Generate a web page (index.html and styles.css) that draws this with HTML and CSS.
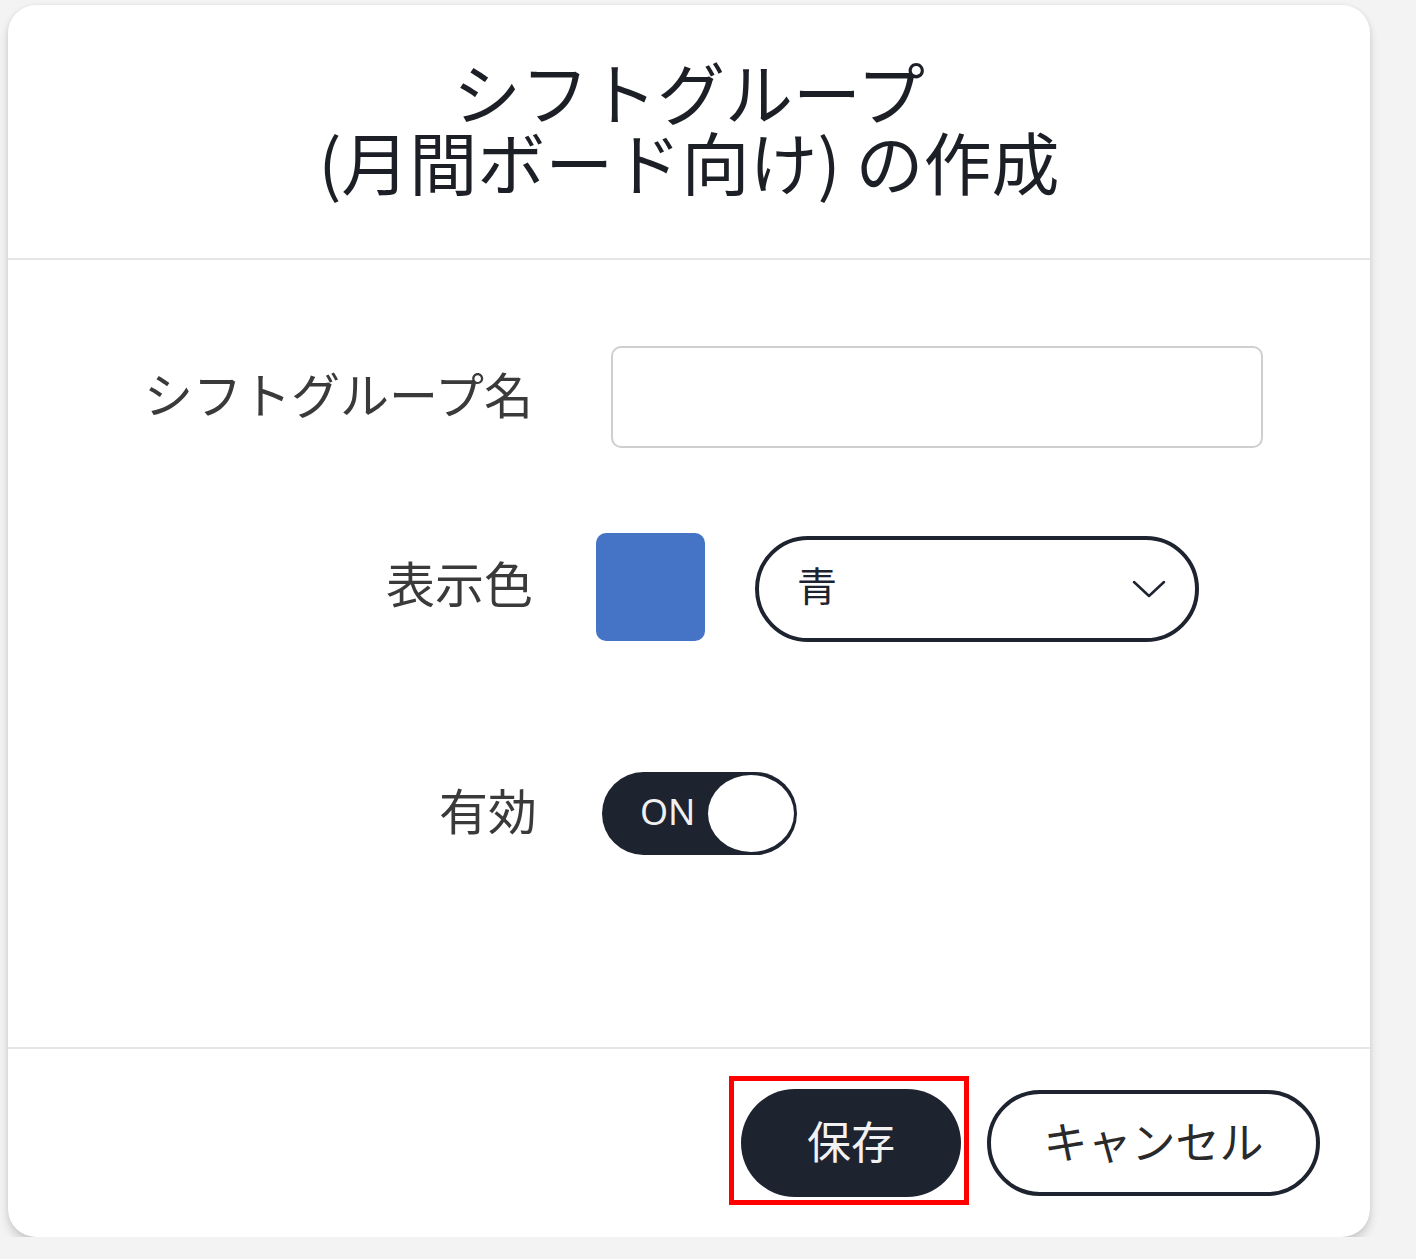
FILE: index.html
```html
<!doctype html>
<html lang="ja">

<head>
    <meta charset="UTF-8">
    <meta name="viewport" content="width=device-width, initial-scale=1.0">
    <title>シフトグループの作成</title>
    <link rel="stylesheet" href="styles.css">
</head>

<body>
    <div class="dialog">
        <div class="dialog-header">
            <h1>シフトグループ<br>(月間ボード向け) の作成</h1>
        </div>

        <div class="dialog-body">
            <div class="form-row row-name">
                <label for="groupName">シフトグループ名</label>
                <input type="text" id="groupName" class="text-input">
            </div>

            <div class="form-row row-color">
                <span class="label">表示色</span>
                <div class="color-field">
                    <span class="swatch"></span>
                    <div class="select-box">
                        <span class="select-value">青</span>
                        <svg width="34" height="18" viewBox="0 0 34 18">
                            <polyline points="2,2 17,16 32,2" fill="none" stroke="#1e2330" stroke-width="2.5" stroke-linecap="round" stroke-linejoin="round" />
                        </svg>
                    </div>
                </div>
            </div>

            <div class="form-row row-active">
                <span class="label label-active">有効</span>
                <div class="toggle">
                    <span class="toggle-text">ON</span>
                    <span class="knob"></span>
                </div>
            </div>
        </div>

        <div class="dialog-footer">
            <div class="highlight-wrap">
                <button class="btn btn-primary">保存</button>
                <span class="highlight"></span>
            </div>
            <button class="btn btn-outline">キャンセル</button>
        </div>
    </div>
</body>

</html>
```

FILE: styles.css
```css
body {
    background-color: #f3f3f3;
    font-family: 'Noto Sans CJK JP', 'Noto Sans', sans-serif;
    color: #1e2330;
    margin: 0;
    padding: 5px 0 0 8px;
}

.dialog {
    width: 1362px;
    height: 1232px;
    background-color: #fff;
    border-radius: 28px;
    box-shadow: 0 6px 10px rgba(0, 0, 0, 0.16), 0 0 4px rgba(0, 0, 0, 0.06);
    display: flex;
    flex-direction: column;
}

.dialog-header {
    height: 253px;
    border-bottom: 2px solid #e5e5e5;
    display: flex;
    align-items: center;
    justify-content: center;
}

.dialog-header h1 {
    margin: 0;
    font-size: 68px;
    line-height: 70px;
    font-weight: 400;
    text-align: center;
    color: #1c1f26;
    padding-bottom: 12px;
}

.dialog-body {
    flex: 1;
    padding-top: 86px;
}

.form-row {
    display: flex;
    align-items: center;
}

.form-row label,
.form-row .label {
    width: 525px;
    text-align: right;
    font-size: 49px;
    color: #3a3a3a;
    flex-shrink: 0;
    padding-bottom: 10px;
}

.form-row .label-active {
    width: 529px;
}

.row-color {
    margin-top: 83px;
}

.row-active {
    margin-top: 130px;
}

.text-input {
    margin-left: 78px;
    width: 652px;
    height: 102px;
    box-sizing: border-box;
    border: 2px solid #cfcfcf;
    border-radius: 10px;
    background-color: #fff;
    font-size: 40px;
    padding: 0 20px;
}

.color-field {
    margin-left: 63px;
    display: flex;
    align-items: center;
    gap: 50px;
}

.swatch {
    width: 109px;
    height: 108px;
    border-radius: 10px;
    background-color: #4574c6;
}

.select-box {
    width: 444px;
    height: 106px;
    box-sizing: border-box;
    border: 4px solid #1e2330;
    border-radius: 53px;
    display: flex;
    align-items: center;
    justify-content: space-between;
    padding: 0 29px 0 38px;
    font-size: 40px;
    margin-top: 5px;
}

.select-value {
    padding-bottom: 10px;
}

.toggle {
    margin-left: 65px;
    width: 195px;
    height: 83px;
    box-sizing: border-box;
    background-color: #1e2330;
    border-radius: 42px;
    display: flex;
    align-items: center;
    justify-content: space-between;
    padding: 0 3px 0 38px;
}

.toggle-text {
    color: #f0f0f0;
    font-size: 36px;
    font-family: 'Noto Sans', sans-serif;
    padding-bottom: 4px;
}

.knob {
    width: 86px;
    height: 77px;
    border-radius: 50%;
    background-color: #fff;
}

.dialog-footer {
    height: 188px;
    border-top: 2px solid #e5e5e5;
    display: flex;
    align-items: center;
    justify-content: flex-end;
    gap: 26px;
    padding-right: 50px;
}

.btn {
    height: 108px;
    border-radius: 54px;
    font-family: inherit;
    font-size: 44px;
    cursor: pointer;
    padding-bottom: 8px;
}

.btn-primary {
    width: 220px;
    background-color: #1e2330;
    color: #f2f2f2;
    border: none;
    display: block;
}

.btn-outline {
    width: 333px;
    height: 106px;
    background-color: #fff;
    color: #2a2a2a;
    border: 4px solid #1e2330;
}

.highlight-wrap {
    position: relative;
}

.highlight {
    position: absolute;
    top: -13px;
    left: -12px;
    right: -8px;
    bottom: -8px;
    border: 5px solid #ff0000;
}
```
